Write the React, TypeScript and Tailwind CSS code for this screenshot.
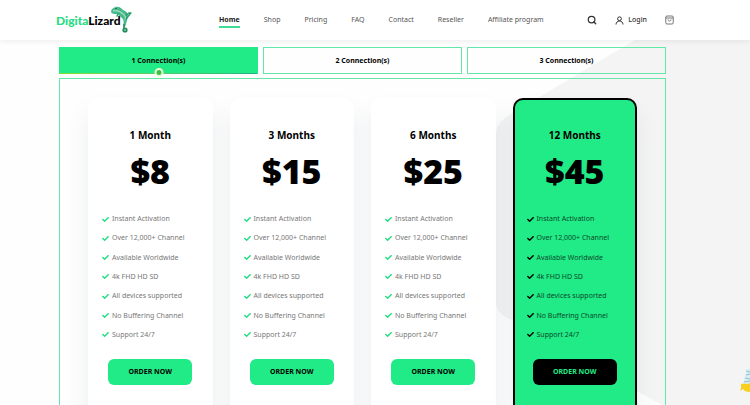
import { useState } from "react"
import { FaCheck } from "react-icons/fa"
import { Search } from "lucide-react"

const navLinks = ["Home", "Shop", "Pricing", "FAQ", "Contact", "Reseller", "Affiliate program"]

const tabs = ["1 Connection(s)", "2 Connection(s)", "3 Connection(s)"]

const features = [
  "Instant Activation",
  "Over 12,000+ Channel",
  "Available Worldwide",
  "4k FHD HD SD",
  "All devices supported",
  "No Buffering Channel",
  "Support 24/7",
]

const plans = [
  { title: "1 Month", price: "$8", featured: false },
  { title: "3 Months", price: "$15", featured: false },
  { title: "6 Months", price: "$25", featured: false },
  { title: "12 Months", price: "$45", featured: true },
]

const Lizard = () => (
  <svg className="absolute left-[53px] -top-[3px]" width="24" height="28" viewBox="0 0 24 28" fill="none" aria-hidden="true">
    <path d="M2 6C2 3 4 2 7 1c3-1 5 1 7 3 3 1 5 3 5 6-1 5-2 8-3 11l-2-1c1-4 1-6-1-8-2-1-3-3-5-4-3 0-5 0-6-2Z" fill="#45b98a" />
    <path d="M4 5c4-1 7 0 10 3 2 1 3 3 2 6" stroke="#a3e2c3" strokeWidth="1.2" />
    <path d="M17 9l3-2 2 0M17 13l4-5M9 8l-1 2" stroke="#2f9d6c" strokeWidth="1.5" strokeLinecap="round" />
    <path d="M15 18v5" stroke="#2b8f63" strokeWidth="1.6" />
    <circle cx="16" cy="24" r="2.6" fill="#1f8a5c" />
    <circle cx="16" cy="24" r="1" fill="#7fd0a6" />
    <circle cx="7" cy="2.5" r="1.8" fill="#5cc393" />
    <circle cx="7" cy="2.5" r="0.8" fill="#14523a" />
  </svg>
)

const Logo = () => (
  <a href="#" className="relative block w-[74px] shrink-0 whitespace-nowrap pt-0.5 font-[Lato,sans-serif] text-[12px] font-black leading-5 text-black">
    <span className="text-[#25dd83]">Digita</span>Lizard
    <Lizard />
  </a>
)

const UserIcon = () => (
  <svg width="9" height="9" viewBox="0 0 18 18" fill="none" stroke="#333" strokeWidth="2" aria-hidden="true">
    <circle cx="9" cy="5.5" r="3.8" />
    <path d="M2 17c0-4 3-7 7-7s7 3 7 7" />
  </svg>
)

const BagIcon = () => (
  <svg width="9" height="10" viewBox="0 0 18 20" fill="none" stroke="#666" strokeWidth="1.8" aria-hidden="true">
    <rect x="1.5" y="2" width="15" height="16" rx="2.5" />
    <path d="M2 6h14M6 9c0 4 6 4 6 0" />
  </svg>
)

const Header = () => (
  <header className="relative z-10 flex h-10 items-center bg-white pl-14 pr-[76px] shadow-[0_1px_6px_rgba(0,0,0,0.08)]">
    <Logo />
    <nav className="ml-[89px] flex gap-6 whitespace-nowrap text-[7px] leading-3 text-[#555]">
      {navLinks.map((link, index) => (
        <a
          key={link}
          href="#"
          className={index === 0 ? "relative font-bold text-[#222] after:absolute after:inset-x-0 after:-bottom-0.5 after:h-0.5 after:bg-[#3fdc98]" : ""}
        >
          {link}
        </a>
      ))}
    </nav>
    <div className="ml-auto flex items-center gap-[18px] text-[7px] leading-3 text-[#333]">
      <button aria-label="Search"><Search size={10} strokeWidth={3} /></button>
      <a href="#" className="flex items-center gap-1 font-medium"><UserIcon />Login</a>
      <button aria-label="Cart"><BagIcon /></button>
    </div>
  </header>
)

interface PlanProps {
  title: string
  price: string
  featured: boolean
}

const PlanCard = ({ title, price, featured }: PlanProps) => (
  <article
    className={`flex h-[340px] flex-1 flex-col rounded-[10px] border-2 shadow-[0_14px_22px_rgba(90,105,125,0.11)] ${
      featured ? "border-black bg-[#20eb86]" : "border-white bg-white"
    }`}
  >
    <h2 className="mt-[27px] text-center text-[10px] font-bold leading-4 text-black">{title}</h2>
    <p className="mt-1.5 text-center font-['Open_Sans',sans-serif] text-[34px] font-extrabold leading-[44px] text-black">{price}</p>
    <ul className="mt-[18px] flex h-[132px] flex-col justify-between pl-3">
      {features.map((feature) => (
        <li
          key={feature}
          className={`flex items-center gap-[3px] whitespace-nowrap text-[7px] leading-4 ${featured ? "text-[#0b4a2b]" : "text-[#777]"}`}
        >
          <FaCheck size={7} className={featured ? "text-black" : "text-[#20dd83]"} />
          {feature}
        </li>
      ))}
    </ul>
    <button
      className={`mx-auto mt-4 h-[26px] w-[84px] rounded-md pt-px text-[7px] font-bold ${
        featured ? "bg-black text-[#20eb86]" : "bg-[#20eb86] text-black"
      }`}
    >
      ORDER NOW
    </button>
  </article>
)

const Backdrop = () => (
  <svg className="absolute right-0 top-0 h-[405px] w-[260px]" viewBox="0 0 260 405" aria-hidden="true">
    <path d="M145 40H260V405H172L14 316Q6 311 6 302V135Q6 124 16 117Z" fill="#f4f4f4" />
  </svg>
)

const Mascot = () => (
  <svg className="absolute right-0 top-[366px]" width="11" height="28" viewBox="0 0 11 28" aria-hidden="true">
    <path d="M8 3h3v15H4Z" fill="#d7edf2" />
    <path d="M7 5l4 1M7 9l4-1M6 12l5 1M5 16l6-1" stroke="#8cc4d2" strokeWidth="1" />
    <path d="M2 18c3-1 5 1 9-1v9c-4 0-6-1-7-3l-3 2 1-3Z" fill="#f9cf1f" />
  </svg>
)

const App = () => {
  const [active, setActive] = useState<number>(0)

  return (
    <div className="relative h-screen overflow-hidden bg-[#fefefe] font-['Noto_Sans',sans-serif]">
      <Backdrop />
      <Header />
      <main className="relative pl-[59px] pr-[84px] pt-[7px]">
        <div role="tablist" className="grid grid-cols-3 gap-[5px]">
          {tabs.map((tab, index) => (
            <button
              key={tab}
              role="tab"
              aria-selected={active === index}
              onClick={() => setActive(index)}
              className={`relative h-[27px] border pt-px text-[7px] font-bold text-black ${
                active === index ? "border-[#20eb86] bg-[#20eb86]" : "border-[#62e8a8]"
              }`}
            >
              {tab}
              {active === index && (
                <>
                  <span className="absolute inset-x-0 -bottom-px h-px bg-gradient-to-r from-[#8bdc2c] to-[#16b383]" />
                  <span className="absolute -bottom-1 left-1/2 size-[9px] -translate-x-1/2 rounded-full border-2 border-[#eaffd8] bg-[#3cbf45]" />
                </>
              )}
            </button>
          ))}
        </div>
        <section className="mt-1 flex gap-[17px] border border-[#62e8a8] px-7 pt-[19px]">
          {plans.map((plan) => (
            <PlanCard key={plan.title} {...plan} />
          ))}
        </section>
      </main>
      <Mascot />
    </div>
  )
}

export default App
